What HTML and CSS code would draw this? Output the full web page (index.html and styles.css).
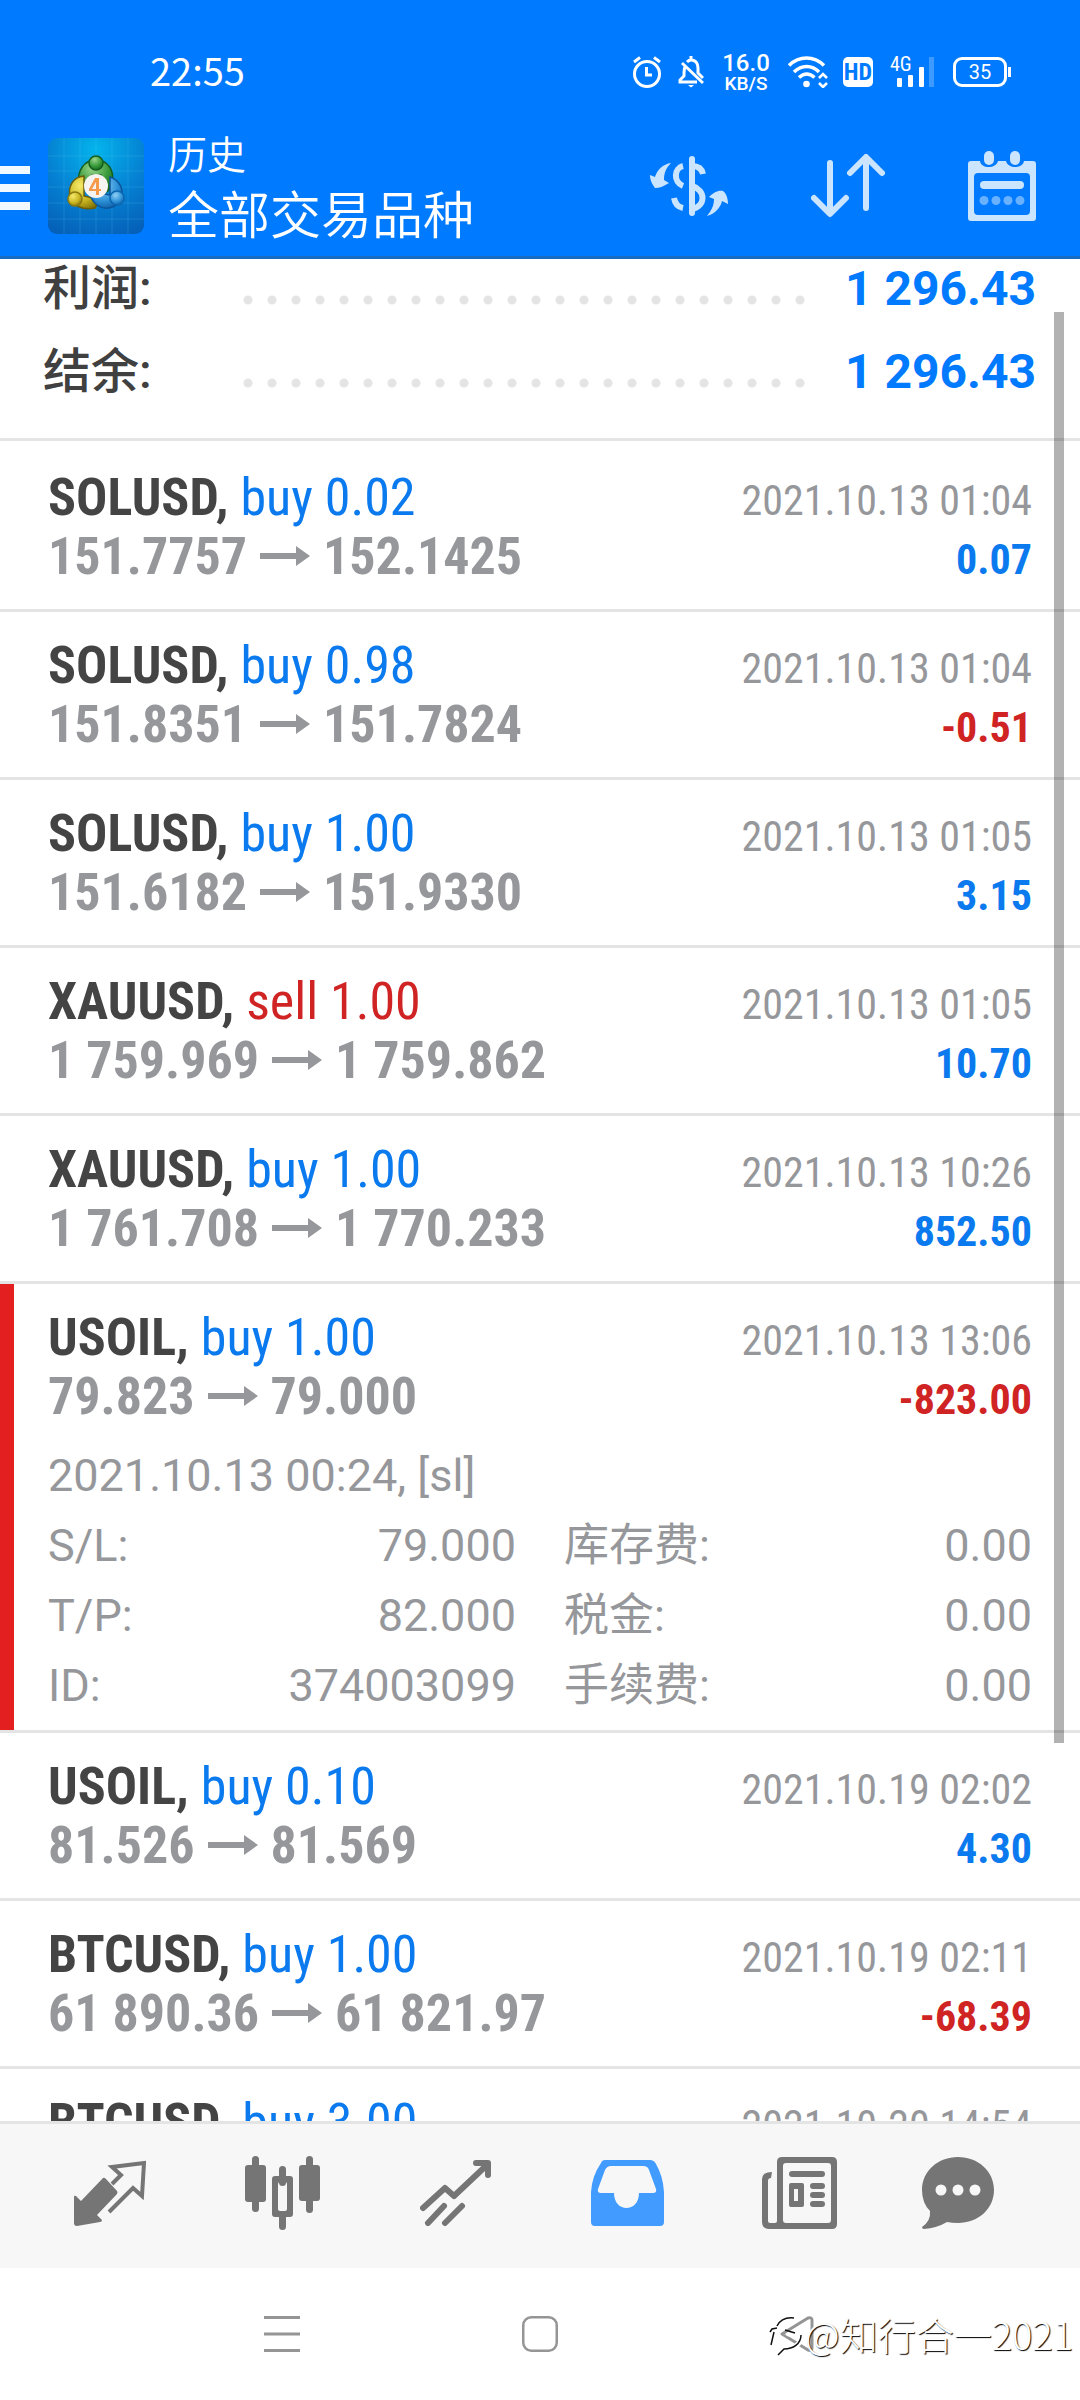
FILE: index.html
```html
<!DOCTYPE html>
<html lang="zh-CN">
<head>
<meta charset="utf-8">
<meta name="viewport" content="width=device-width, initial-scale=1">
<title>历史</title>
<link rel="stylesheet" href="styles.css">
</head>
<body>
<header class="top">
  <div class="status">
    <time class="clock">22:55</time>
    <div class="indicators">
      <svg width="30" height="32" viewBox="0 0 30 32" fill="none" stroke="#fff" stroke-width="3"><circle cx="15" cy="18" r="12.5"/><path d="M14.5 11v8H20M2 6l6-4.500M28 6l-6-4.500"/></svg>
      <svg class="bell" width="26" height="32" viewBox="0 0 26 32" fill="none" stroke="#fff" stroke-width="3"><path d="M4 7l21 20M7 11c-1 2-1 4-1 9l-4 4v2h17M9 6c1-1 2-2 4-2 5 0 7 4 7 8v5l5 5M13 4V0"/><path d="M10 29h6l-3 2.500z" fill="#fff" stroke="none"/></svg>
      <div class="speed"><b>16.0</b><span>KB/S</span></div>
      <svg class="wifi" width="40" height="32" viewBox="0 0 40 32" fill="none" stroke="#fff" stroke-width="3.500"><path d="M1 9.500C11-.5 26-.5 36 9.500M6 16c7.500-7.500 18-7.500 25 0M11 21.500c5-4.500 10.500-4.500 15.500 0"/><circle cx="18.500" cy="28" r="3.300" fill="#fff" stroke="none"/><path d="M31 22l4-4 4 4M31 27l4 4 4-4" stroke-width="2.600"/></svg>
      <span class="hd">HD</span>
      <div class="signal"><span>4G</span>
        <svg width="39" height="20" viewBox="0 0 39 20" fill="#fff"><rect y="11" width="5" height="9" rx="1"/><rect x="11" y="8" width="5" height="12" rx="1"/><rect x="22" width="5" height="20" rx="1"/></svg>
        <i class="weak"></i>
      </div>
      <span class="battery">35</span>
    </div>
  </div>
  <div class="bar">
    <button class="burger" aria-label="菜单"><svg width="30" height="44" viewBox="0 0 30 44" fill="#f2f9ff"><path d="M0 0h30v8H0zM0 18h30v8H0zM0 36h30v8H0z"/></svg></button>
    <svg class="logo" width="96" height="96" viewBox="0 0 96 96">
      <defs>
        <radialGradient id="bg" cx=".5" cy=".12" r=".95"><stop offset="0" stop-color="#04b4ec"/><stop offset=".55" stop-color="#0580d2"/><stop offset="1" stop-color="#0560b8"/></radialGradient>
        <radialGradient id="gr" cx=".4" cy=".25" r=".8"><stop offset="0" stop-color="#9ad58c"/><stop offset=".6" stop-color="#389a3a"/><stop offset="1" stop-color="#14641c"/></radialGradient>
        <radialGradient id="ye" cx=".35" cy=".3" r=".8"><stop offset="0" stop-color="#f4ea6a"/><stop offset=".6" stop-color="#c8b420"/><stop offset="1" stop-color="#7d6c08"/></radialGradient>
        <radialGradient id="bl" cx=".4" cy=".3" r=".8"><stop offset="0" stop-color="#8fd0f4"/><stop offset=".6" stop-color="#2b8fd6"/><stop offset="1" stop-color="#0a559c"/></radialGradient>
      </defs>
      <rect width="96" height="96" rx="9" fill="url(#bg)"/>
      <path d="M16 0v96M32 0v96M48 0v96M64 0v96M80 0v96M0 18h96M0 33h96M0 49h96M0 65h96M0 81h96" stroke="#5cc8f4" stroke-opacity=".2"/>
      <g stroke-width="1.500">
        <path d="M31 45c-2-12 5-23 17-23s19 11 16 23c-1 6-4 9-8 10l-3-18h-9l-4 9z" fill="url(#gr)" stroke="#155f1d"/>
        <path d="M36 38c-12 1-16 12-14 20 2 9 12 15 25 12l5-8-16-4z" fill="url(#ye)" stroke="#6d5f0a"/>
        <path d="M62 39c10 3 14 13 11 21-3 10-16 13-24 7-5-4-7-9-7-14l20 4z" fill="url(#bl)" stroke="#0c559a"/>
        <circle cx="48" cy="25" r="7" fill="url(#gr)" stroke="#155f1d"/>
        <circle cx="27" cy="61" r="7" fill="url(#ye)" stroke="#8a7a12"/>
        <circle cx="69" cy="60" r="7" fill="url(#bl)" stroke="#0c66b0"/>
      </g>
      <circle cx="48" cy="48" r="12" fill="#f6f4f2"/>
      <path d="M50 40h-3l-6 11v2h7v4h3v-4h2v-2h-2V40zM48 44v7h-4z" fill="#f59a4a" fill-rule="evenodd"/>
    </svg>
    <div class="titles"><h1>历史</h1><p>全部交易品种</p></div>
    <div class="actions">
      <button aria-label="货币"><svg width="78" height="60" viewBox="0 0 78 60" fill="none" stroke="#cbe5ff" stroke-width="6"><path d="M42 3v54" stroke-linecap="round"/><path d="M33 10c-9 2-10 16 0 20M42 10c6 0 10 3 11 8M24 42c1 6 4 9 9 10M42 30c14 4 14 20 0 23" /><path d="M21 7C13 8 7 14 5 21l-5-2c0 6 3 10 5 13 5 0 9-2 14-5l-5-3c0-7 2-12 7-17zM57 60c8-2 14-9 15-15l6 3c0-6-2-11-5-13-5-1-10 2-14 6l5 2c0 7-3 12-7 17z" fill="#cbe5ff" stroke="none"/></svg></button>
      <button aria-label="排序"><svg width="74" height="64" viewBox="0 0 74 64" fill="none" stroke="#cbe5ff" stroke-width="6" stroke-linecap="round" stroke-linejoin="round"><path d="M19 9v50M3 44l16 16 16-16M55 54V4M39 19L55 3l16 16"/></svg></button>
      <button aria-label="日历"><svg width="68" height="70" viewBox="0 0 68 70"><path d="M3 10h9c1 8 16 8 18 0h8c2 8 17 8 18 0h9q3 0 3 3v54q0 3-3 3H3q-3 0-3-3V13q0-3 3-3zM10 22q-4 0-4 4v34q0 4 4 4h48q4 0 4-4V26q0-4-4-4z" fill="#cbe5ff" fill-rule="evenodd"/><rect x="16" width="10" height="14" rx="5" fill="#cbe5ff"/><rect x="42" width="10" height="14" rx="5" fill="#cbe5ff"/><rect x="12" y="30" width="44" height="8" rx="4" fill="#cbe5ff"/><g fill="#68b1ff"><circle cx="16" cy="49.500" r="4.500"/><circle cx="28" cy="49.500" r="4.500"/><circle cx="40" cy="49.500" r="4.500"/><circle cx="52" cy="49.500" r="4.500"/></g></svg></button>
    </div>
  </div>
</header>

<main class="history">
  <dl class="summary">
    <div><dt>利润:</dt><dd class="dots"></dd><dd class="sum">1 296.43</dd></div>
    <div><dt>结余:</dt><dd class="dots"></dd><dd class="sum">1 296.43</dd></div>
  </dl>
  <ul class="deals">
    <li class="deal"><div class="line"><h2>SOLUSD, <span class="buy">buy 0.02</span></h2><time>2021.10.13 01:04</time></div><div class="line"><p>151.7757<svg class="arrow" viewBox="0 0 50 20"><path d="M0 7h36V0l14 10-14 10v-7H0z"/></svg>152.1425</p><b class="buy">0.07</b></div></li>
    <li class="deal"><div class="line"><h2>SOLUSD, <span class="buy">buy 0.98</span></h2><time>2021.10.13 01:04</time></div><div class="line"><p>151.8351<svg class="arrow" viewBox="0 0 50 20"><path d="M0 7h36V0l14 10-14 10v-7H0z"/></svg>151.7824</p><b class="sell">-0.51</b></div></li>
    <li class="deal"><div class="line"><h2>SOLUSD, <span class="buy">buy 1.00</span></h2><time>2021.10.13 01:05</time></div><div class="line"><p>151.6182<svg class="arrow" viewBox="0 0 50 20"><path d="M0 7h36V0l14 10-14 10v-7H0z"/></svg>151.9330</p><b class="buy">3.15</b></div></li>
    <li class="deal"><div class="line"><h2>XAUUSD, <span class="sell">sell 1.00</span></h2><time>2021.10.13 01:05</time></div><div class="line"><p>1 759.969<svg class="arrow" viewBox="0 0 50 20"><path d="M0 7h36V0l14 10-14 10v-7H0z"/></svg>1 759.862</p><b class="buy">10.70</b></div></li>
    <li class="deal"><div class="line"><h2>XAUUSD, <span class="buy">buy 1.00</span></h2><time>2021.10.13 10:26</time></div><div class="line"><p>1 761.708<svg class="arrow" viewBox="0 0 50 20"><path d="M0 7h36V0l14 10-14 10v-7H0z"/></svg>1 770.233</p><b class="buy">852.50</b></div></li>
    <li class="deal open"><div class="line"><h2>USOIL, <span class="buy">buy 1.00</span></h2><time>2021.10.13 13:06</time></div><div class="line"><p>79.823<svg class="arrow" viewBox="0 0 50 20"><path d="M0 7h36V0l14 10-14 10v-7H0z"/></svg>79.000</p><b class="sell">-823.00</b></div>
      <div class="details">
        <p>2021.10.13 00:24, [sl]</p>
        <dl>
          <div><dt>S/L:</dt><dd>79.000</dd></div><div><dt>库存费:</dt><dd>0.00</dd></div>
          <div><dt>T/P:</dt><dd>82.000</dd></div><div><dt>税金:</dt><dd>0.00</dd></div>
          <div><dt>ID:</dt><dd>374003099</dd></div><div><dt>手续费:</dt><dd>0.00</dd></div>
        </dl>
      </div>
    </li>
    <li class="deal"><div class="line"><h2>USOIL, <span class="buy">buy 0.10</span></h2><time>2021.10.19 02:02</time></div><div class="line"><p>81.526<svg class="arrow" viewBox="0 0 50 20"><path d="M0 7h36V0l14 10-14 10v-7H0z"/></svg>81.569</p><b class="buy">4.30</b></div></li>
    <li class="deal"><div class="line"><h2>BTCUSD, <span class="buy">buy 1.00</span></h2><time>2021.10.19 02:11</time></div><div class="line"><p>61 890.36<svg class="arrow" viewBox="0 0 50 20"><path d="M0 7h36V0l14 10-14 10v-7H0z"/></svg>61 821.97</p><b class="sell">-68.39</b></div></li>
    <li class="deal"><div class="line"><h2>BTCUSD, <span class="buy">buy 3.00</span></h2><time>2021.10.20 14:54</time></div></li>
  </ul>
  <i class="scrollbar"></i>
</main>

<nav class="tabs">
  <button aria-label="行情"><svg width="72" height="66" viewBox="0 0 72 66"><path d="M29 18q1-1 3 1l11 12q1 1 0 3L23 55l5 5q0 2-2 2L3 66q-3 0-3-3V37q0-2 2-1l5 5z" fill="#757575"/><path d="M38 23l9-9-9-8L70 2l-2 33-9-8-24 24" transform="translate(0 1)" fill="none" stroke="#757575" stroke-width="4"/></svg></button>
  <button aria-label="图表"><svg width="76" height="76" viewBox="0 0 76 76" fill="#757575"><rect x="7" y="1" width="7" height="56" rx="3.500"/><rect y="10" width="21" height="37" rx="3"/><rect x="61" y="1" width="7" height="57" rx="3.500"/><rect x="54" y="10" width="21" height="36" rx="3"/><rect x="34" y="11" width="7" height="20" rx="3.500"/><rect x="34" y="56" width="7" height="19" rx="3.500"/><path d="M30 21h15q3 0 3 3v35q0 3-3 3H30q-3 0-3-3V24q0-3 3-3zM35 27q-2 0-2 2v25q0 2 2 2h5q2 0 2-2V29q0-2-2-2z" fill-rule="evenodd"/></svg></button>
  <button aria-label="交易"><svg width="71" height="66" viewBox="0 0 71 66" fill="none" stroke="#757575" stroke-width="6" stroke-linecap="round" stroke-linejoin="round"><path d="M3 48l22-20 9 8L68 4M56 3h12v12M8 63l16-17M25 63l17-17"/></svg></button>
  <button aria-label="历史" aria-current="page"><svg width="73" height="66" viewBox="0 0 73 66" fill="#429bff"><path d="M14 0h45q4 0 6 4 7 12 8 28v30q0 4-4 4H4q-4 0-4-4V32Q1 16 10 3q1-3 4-3zM20 6q-4 0-6 4L7 29q-1 4 3 4h13c0 20 25 20 25 0h14q4 0 3-4L58 10q-1-4-6-4z" fill-rule="evenodd"/></svg></button>
  <button aria-label="新闻"><svg width="76" height="72" viewBox="0 0 76 72" fill="#757575"><path d="M20 0h50q5 0 5 5v62q0 5-5 5H7q-7 0-7-7V22q0-7 10-7l-1 6q-3 0-3 3v40q0 2 2 2h5q2 0 2-2V5q0-5 5-5zM24 6q-3 0-3 3v54q0 3 3 3h42q3 0 3-3V9q0-3-3-3z" fill-rule="evenodd"/><rect x="27" y="14" width="36" height="6" rx="3"/><path d="M29 26h11q2 0 2 2v20q0 2-2 2H29q-2 0-2-2V28q0-2 2-2zM32 32v12h4V32z" fill-rule="evenodd"/><rect x="48" y="26" width="15" height="6" rx="3"/><rect x="48" y="35" width="15" height="6" rx="3"/><rect x="48" y="44" width="15" height="6" rx="3"/></svg></button>
  <button aria-label="消息"><svg width="72" height="72" viewBox="0 0 72 72"><path d="M36 0c20 0 36 14 36 33S56 66 36 66q-6 0-11-1-10 6-23 7-2 0-2-2 9-6 8-16Q0 46 0 33C0 14 16 0 36 0z" fill="#757575"/><g fill="#f7f7f7"><circle cx="19" cy="33" r="5.500"/><circle cx="36" cy="33" r="5.500"/><circle cx="53" cy="33" r="5.500"/></g></svg></button>
</nav>

<footer class="system">
  <button aria-label="最近任务"><svg width="36" height="36" viewBox="0 0 36 36" stroke="#959595" stroke-width="3"><path d="M0 1.500h36M0 18h36M0 34.500h36"/></svg></button>
  <button aria-label="主屏幕"><svg width="36" height="36" viewBox="0 0 36 36" fill="none" stroke="#959595" stroke-width="2.500"><rect x="1.250" y="1.250" width="33.500" height="33.500" rx="8"/></svg></button>
  <button aria-label="返回"><svg width="36" height="36" viewBox="0 0 36 36" fill="none" stroke="#959595" stroke-width="3" stroke-linejoin="round"><path d="M2 18L28 2q4-1 4 2v28q0 3-4 2z"/></svg></button>
  <p class="watermark"><svg width="36" height="44" viewBox="0 0 36 44" fill="none"><path d="M2 33L6 20C10 10 17 5 26 6M2 18c6-2 10-2 13-2M18 21c4 3 12 1 17-4M33 18c2 10-5 20-20 20l-5 5" stroke="#fff" stroke-width="5"/><path d="M2 33L5 20M8 14C11 8 16 5 25 6M1 20l2-3 5-1M16 18l10 3M32 23c0 9-8 14-17 14l-6 6" stroke="#111" stroke-width="1.500"/></svg>@知行合一2021</p>
</footer>
</body>
</html>
```
FILE: styles.css
```css
* { box-sizing: border-box; margin: 0; padding: 0; }

body {
  display: flex;
  flex-direction: column;
  height: 100vh;
  background: #fff;
  color: #444;
  font-family: Roboto, "Noto Sans CJK SC", sans-serif;
}

button {
  display: flex;
  align-items: center;
  justify-content: center;
  border: 0;
  background: none;
  font: inherit;
}

ul { list-style: none; }
svg { display: block; flex: none; }

/* Header */
.top {
  flex: none;
  background: #007aff;
  border-bottom: 3px solid #1a6cc0;
  color: #fff;
}

.status {
  display: flex;
  align-items: center;
  justify-content: space-between;
  height: 120px;
  padding: 24px 73px 0 150px;
}

.clock {
  padding-bottom: 4px;
  font-family: "Noto Sans CJK SC", sans-serif;
  font-size: 38px;
  line-height: 48px;
}

.indicators { display: flex; align-items: center; }
.bell { margin-left: 16px; }

.speed {
  display: flex;
  flex-direction: column;
  align-items: center;
  width: 48px;
  margin-left: 18px;
  font-weight: 500;
  font-size: 19px;
  line-height: 19px;
}

.speed b { font-size: 24px; line-height: 22px; font-weight: 500; }
.wifi { margin-left: 18px; }

.hd {
  width: 30px;
  height: 30px;
  margin-left: 15px;
  border-radius: 5px;
  background: #fff;
  color: #007aff;
  font: bold 24px/30px "Roboto Condensed", sans-serif;
  text-align: center;
}

.signal {
  position: relative;
  width: 46px;
  height: 30px;
  margin-left: 17px;
  padding: 10px 0 0 7px;
}

.signal span {
  position: absolute;
  left: 0;
  top: -1px;
  font: 20px/16px "Roboto Condensed", sans-serif;
}

.weak {
  position: absolute;
  right: 2px;
  top: 0;
  width: 5px;
  height: 30px;
  background: #3d9aff;
}

.battery {
  position: relative;
  width: 54px;
  height: 30px;
  margin-left: 17px;
  border: 3px solid #fff;
  border-radius: 9px;
  font-size: 20px;
  line-height: 24px;
  text-align: center;
}

.battery::after {
  content: "";
  position: absolute;
  right: -7px;
  top: 7px;
  width: 3px;
  height: 10px;
  background: #fff;
}

.bar {
  display: flex;
  align-items: center;
  height: 136px;
  padding: 0 44px 4px 0;
}

.burger { padding-top: 4px; }
.logo { margin-left: 18px; }

.titles {
  margin-left: 24px;
  padding-bottom: 8px;
  font-family: "Noto Sans CJK SC", sans-serif;
}

.titles h1 { font-size: 39px; line-height: 60px; font-weight: 350; }
.titles p { font-size: 51px; line-height: 60px; font-weight: 350; }

.actions {
  display: flex;
  align-items: center;
  gap: 83px;
  margin-left: auto;
}

/* Account summary */
.history {
  position: relative;
  flex: 1;
  min-height: 0;
  overflow: hidden;
}

.summary {
  display: flex;
  flex-direction: column;
  gap: 27px;
  padding: 2px 44px 38px 43px;
  border-bottom: 3px solid #e4e4e4;
}

.summary div {
  display: flex;
  align-items: center;
  font-size: 48px;
  line-height: 56px;
}

.summary dt { width: 193px; font-weight: 500; color: #404040; }

.dots {
  flex: 1;
  height: 24px;
  margin-top: 21px;
  margin-right: 34px;
  background: radial-gradient(circle, #e4e4e4 4px, transparent 5px) 0 0 / 24px 24px repeat-x;
}

.sum { color: #007aff; font-weight: 700; }

/* Deals */
.deals { padding-top: 3px; }

.deal {
  padding: 24px 48px 23px;
  border-bottom: 3px solid #e4e4e4;
  font-family: "Roboto Condensed", Roboto, sans-serif;
}

.line {
  display: flex;
  align-items: baseline;
  justify-content: space-between;
  height: 59px;
  line-height: 59px;
}

.line h2, .line p { font-size: 52px; font-weight: 700; }
.line h2 span { font-weight: 400; }
.line p { color: #96979b; }
.line time, .line b { font-size: 42px; }
.line time { color: #96979b; }
.line .buy { color: #0a7aee; }
.line .sell { color: #d02424; }

.arrow {
  display: inline-block;
  width: 50px;
  height: 20px;
  margin: 0 13px;
  vertical-align: 8px;
  fill: #96979b;
}

.open { position: relative; padding-bottom: 9px; }

.open::before {
  content: "";
  position: absolute;
  left: 0;
  top: 0;
  bottom: 0;
  width: 14px;
  background: #e41f1f;
}

.details {
  margin-top: 15px;
  color: #96979b;
  font-family: Roboto, "Noto Sans CJK SC", sans-serif;
  font-size: 45px;
  line-height: 70px;
}

.details dl { display: grid; grid-template-columns: 1fr 1fr; column-gap: 48px; }
.details dl div { display: flex; justify-content: space-between; height: 70px; }

.scrollbar {
  position: absolute;
  right: 16px;
  top: 53px;
  width: 10px;
  height: 1431px;
  background: rgba(0, 0, 0, .3);
}

/* Tab bar */
.tabs {
  flex: none;
  display: grid;
  grid-template-columns: repeat(5, 6fr) 5fr;
  height: 147px;
  padding: 0 50px 6px 24px;
  border-top: 3px solid #e4e4e4;
  background: #f7f7f7;
}

/* System navigation */
.system {
  position: relative;
  flex: none;
  display: grid;
  grid-template-columns: repeat(3, 1fr);
  height: 132px;
  padding: 0 153px;
}

.watermark {
  position: absolute;
  right: 7px;
  bottom: 38px;
  display: flex;
  align-items: center;
  color: #fff;
  font: 300 38px/56px "Noto Sans CJK SC", sans-serif;
  text-shadow: 1px 1px 1px #000;
}
```
